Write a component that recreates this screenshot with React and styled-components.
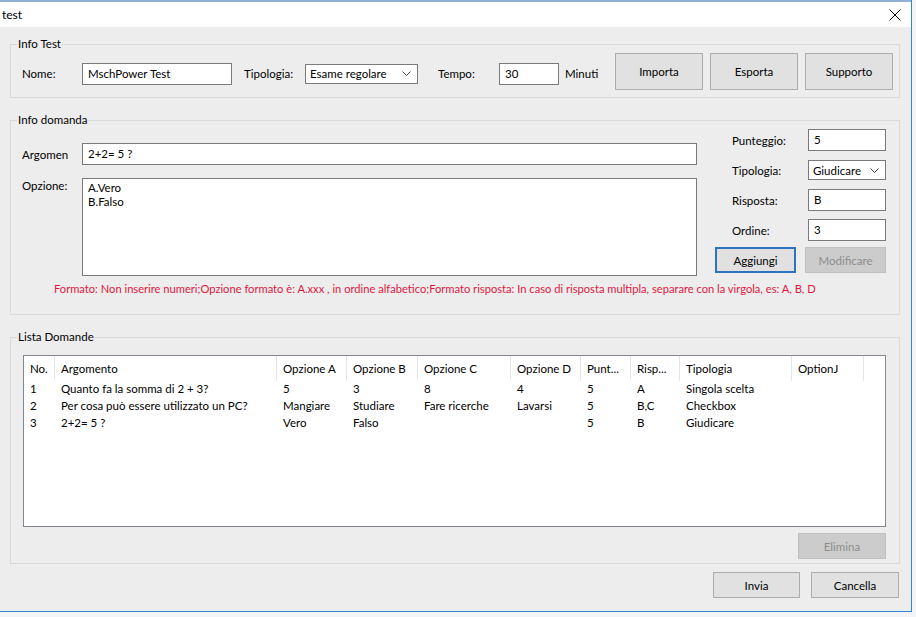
import styled, { createGlobalStyle } from "styled-components";

const GlobalStyle = createGlobalStyle`
  html, body { margin: 0; padding: 0; background: #f3f4f5; }
  body {
    font-family: Lato, "Noto Sans", sans-serif;
    font-size: 11.5px;
    color: #000;
  }
  * { box-sizing: border-box; }
`;

const Window = styled.div`
  width: 912px;
  height: 612px;
  background: #ededed;
  border-right: 1px solid #2f86d2;
  border-bottom: 1px solid #2f86d2;
  display: flex;
  flex-direction: column;
`;

const TopStrip = styled.div`
  height: 2px;
  background: #8fb2d4;
`;

const TitleBar = styled.div`
  height: 25px;
  background: #fff;
  display: flex;
  align-items: center;
  justify-content: space-between;
  padding: 0 10px 0 2px;
  font-size: 12px;
`;

const Body = styled.div`
  flex: 1;
  display: flex;
  flex-direction: column;
  gap: 14px;
  padding: 9px 11px 0 10px;
`;

const GroupBox = styled.fieldset`
  margin: 0;
  padding: 0;
  width: 890px;
  min-width: 0;
  border: 1px solid #d9d9d9;
`;

const Legend = styled.legend`
  margin-left: 6px;
  padding: 0 1px;
  height: 16px;
  line-height: 16px;
`;

const TestRow = styled.div`
  display: flex;
  align-items: center;
  padding: 1px 6px 7px 11px;
`;

const Fields = styled.div`
  display: flex;
  align-items: center;
  margin-top: 4px;
`;

const Label = styled.div`
  width: ${(p) => p.$w}px;
  margin-left: ${(p) => p.$ml || 0}px;
  margin-right: ${(p) => p.$mr || 0}px;
  padding-top: ${(p) => p.$pt || 0}px;
  white-space: nowrap;
  overflow: hidden;
  flex-shrink: 0;
`;

const TextBox = styled.div`
  width: ${(p) => (p.$w ? `${p.$w}px` : "auto")};
  flex: ${(p) => (p.$w ? "none" : 1)};
  height: ${(p) => p.$h || 22}px;
  background: #fff;
  border: 1px solid #7a7a7a;
  padding: 1px 5px 0;
  line-height: 18px;
  white-space: pre;
  overflow: hidden;
`;

const MultiLine = styled(TextBox)`
  line-height: 13.5px;
  padding-top: 2px;
`;

const Combo = styled.div`
  width: ${(p) => p.$w}px;
  height: 20px;
  background: #fff;
  border: 1px solid #7a7a7a;
  display: flex;
  align-items: center;
  justify-content: space-between;
  padding: 0 6px 0 4px;
`;

const Button = styled.div`
  width: ${(p) => p.$w || 88}px;
  height: ${(p) => p.$h || 26}px;
  display: flex;
  align-items: center;
  justify-content: center;
  background: ${(p) => (p.$disabled ? "#cccccc" : "#e1e1e1")};
  color: ${(p) => (p.$disabled ? "#8c8c8c" : "#000")};
  border: ${(p) =>
    p.$focused ? "2px solid #2d73bd" : `1px solid ${p.$disabled ? "#bfbfbf" : "#adadad"}`};
`;

const ButtonBar = styled.div`
  display: flex;
  gap: ${(p) => p.$gap || 7}px;
  margin-left: auto;
  margin-top: ${(p) => p.$mt || 0}px;
`;

const DomandaBody = styled.div`
  display: grid;
  grid-template-columns: 1fr 171px;
  column-gap: 18px;
  padding: 1px 13px 17px 11px;
`;

const LeftPart = styled.div`
  margin-top: 14px;
  display: flex;
  flex-direction: column;
  gap: 13px;
`;

const FieldRow = styled.div`
  display: flex;
  align-items: ${(p) => (p.$top ? "flex-start" : "center")};
`;

const RightPart = styled.div`
  display: flex;
  flex-direction: column;
  gap: 8px;
`;

const PropRow = styled.div`
  display: flex;
  align-items: center;
  height: 22px;
  padding-left: 17px;
`;

const Hint = styled.div`
  grid-column: 1 / -1;
  margin-top: 5px;
  padding-left: 32px;
  color: #e0173f;
  font-size: 11.15px;
  line-height: 16px;
  white-space: nowrap;
`;

const ListBody = styled.div`
  display: flex;
  flex-direction: column;
  align-items: flex-end;
  gap: 6px;
  padding: 10px 13px 4px 12px;
`;

const ListView = styled.div`
  width: 863px;
  height: 172px;
  background: #fff;
  border: 1px solid #828790;
`;

const cols = "31px 222px 70px 71px 93px 70px 50px 49px 112px 72px";

const HeaderRow = styled.div`
  display: grid;
  grid-template-columns: ${cols};
  height: 25px;
`;

const HeaderCell = styled.div`
  padding-left: 6px;
  line-height: 25px;
  border-right: 1px solid #e5e5e5;
  white-space: nowrap;
  overflow: hidden;
`;

const DataRow = styled.div`
  display: grid;
  grid-template-columns: ${cols};
  height: 17px;
  line-height: 16px;
`;

const Cell = styled.div`
  padding-left: 6px;
  white-space: nowrap;
  overflow: hidden;
`;

const Footer = styled.div`
  display: flex;
  justify-content: flex-end;
  gap: 11px;
  margin-top: -6px;
  padding-right: 1px;
`;

const Chevron = () => (
  <svg width="9" height="5" viewBox="0 0 9 5">
    <polyline points="0.5,0.5 4.5,4.5 8.5,0.5" fill="none" stroke="#444" strokeWidth="1" />
  </svg>
);

const CloseIcon = () => (
  <svg width="12" height="12" viewBox="0 0 12 12">
    <path d="M0.5 0.5 L11.5 11.5 M11.5 0.5 L0.5 11.5" stroke="#000" strokeWidth="1" />
  </svg>
);

const headers = ["No.", "Argomento", "Opzione A", "Opzione B", "Opzione C", "Opzione D", "Punt...", "Risp...", "Tipologia", "OptionJ"];

const rows = [
  ["1", "Quanto fa la somma di 2 + 3?", "5", "3", "8", "4", "5", "A", "Singola scelta", ""],
  ["2", "Per cosa può essere utilizzato un PC?", "Mangiare", "Studiare", "Fare ricerche", "Lavarsi", "5", "B,C", "Checkbox", ""],
  ["3", "2+2= 5 ?", "Vero", "Falso", "", "", "5", "B", "Giudicare", ""],
];

export default function App() {
  return (
    <>
      <GlobalStyle />
      <Window>
        <TopStrip />
        <TitleBar>
          <span>test</span>
          <CloseIcon />
        </TitleBar>
        <Body>
          <GroupBox>
            <Legend>Info Test</Legend>
            <TestRow>
              <Fields>
                <Label $w={60}>Nome:</Label>
                <TextBox $w={150}>MschPower Test</TextBox>
                <Label $w={61} $ml={12}>Tipologia:</Label>
                <Combo $w={113}>
                  <span>Esame regolare</span>
                  <Chevron />
                </Combo>
                <Label $w={61} $ml={20}>Tempo:</Label>
                <TextBox $w={60}>30</TextBox>
                <Label $w={40} $ml={6}>Minuti</Label>
              </Fields>
              <ButtonBar>
                <Button $h={37}>Importa</Button>
                <Button $h={37}>Esporta</Button>
                <Button $h={37}>Supporto</Button>
              </ButtonBar>
            </TestRow>
          </GroupBox>

          <GroupBox>
            <Legend>Info domanda</Legend>
            <DomandaBody>
              <LeftPart>
                <FieldRow>
                  <Label $w={46} $mr={14}>Argomento:</Label>
                  <TextBox>2+2= 5 ?</TextBox>
                </FieldRow>
                <FieldRow $top>
                  <Label $w={60} $pt={1}>Opzione:</Label>
                  <MultiLine $h={98}>{"A.Vero\nB.Falso"}</MultiLine>
                </FieldRow>
              </LeftPart>
              <RightPart>
                <PropRow>
                  <Label $w={76}>Punteggio:</Label>
                  <TextBox $w={78}>5</TextBox>
                </PropRow>
                <PropRow>
                  <Label $w={76}>Tipologia:</Label>
                  <Combo $w={78}>
                    <span>Giudicare</span>
                    <Chevron />
                  </Combo>
                </PropRow>
                <PropRow>
                  <Label $w={76}>Risposta:</Label>
                  <TextBox $w={78}>B</TextBox>
                </PropRow>
                <PropRow>
                  <Label $w={76}>Ordine:</Label>
                  <TextBox $w={78}>3</TextBox>
                </PropRow>
                <ButtonBar $gap={9} $mt={-2}>
                  <Button $w={81} $focused>Aggiungi</Button>
                  <Button $w={81} $disabled>Modificare</Button>
                </ButtonBar>
              </RightPart>
              <Hint>
                Formato: Non inserire numeri;Opzione formato è: A.xxx , in ordine alfabetico;Formato risposta: In caso di risposta multipla, separare con la virgola, es: A, B, D
              </Hint>
            </DomandaBody>
          </GroupBox>

          <GroupBox>
            <Legend>Lista Domande</Legend>
            <ListBody>
              <ListView>
                <HeaderRow>
                  {headers.map((h) => (
                    <HeaderCell key={h}>{h}</HeaderCell>
                  ))}
                </HeaderRow>
                {rows.map((r) => (
                  <DataRow key={r[0]}>
                    {r.map((c, i) => (
                      <Cell key={i}>{c}</Cell>
                    ))}
                  </DataRow>
                ))}
              </ListView>
              <Button $disabled>Elimina</Button>
            </ListBody>
          </GroupBox>

          <Footer>
            <Button $w={87}>Invia</Button>
            <Button>Cancella</Button>
          </Footer>
        </Body>
      </Window>
    </>
  );
}
